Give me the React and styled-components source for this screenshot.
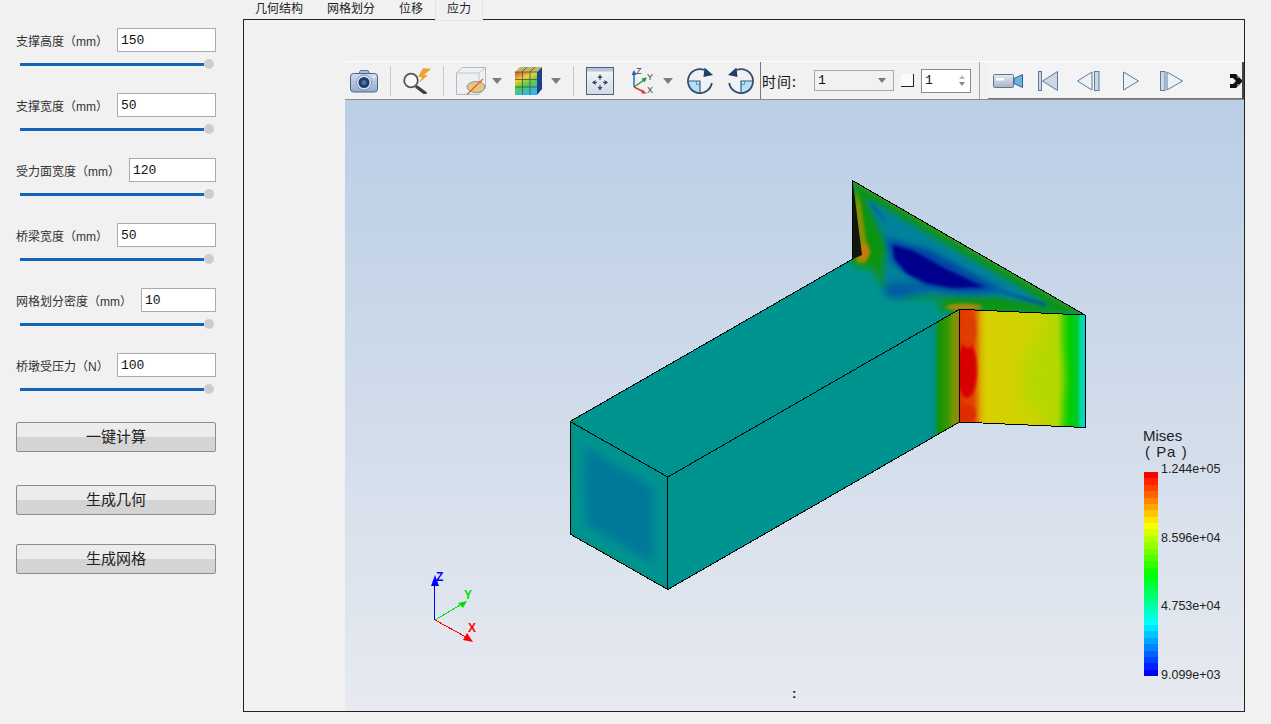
import React from "react";
import styled, { createGlobalStyle } from "styled-components";

const GlobalStyle = createGlobalStyle`
  html, body {
    margin: 0;
    height: 100%;
    overflow: hidden;
    background: #f1f1f1;
  }
  * { box-sizing: border-box; }
`;

const UI_FONT = `"Liberation Sans", "Noto Sans CJK SC", sans-serif`;
const CJK_FONT = `"Noto Sans CJK SC", sans-serif`;
const MONO_FONT = `"Liberation Mono", monospace`;

const Page = styled.div`
  display: flex;
  width: 1271px;
  height: 724px;
  background: #f1f1f1;
  font-family: ${UI_FONT};
`;

/* left panel */
const Sidebar = styled.aside`
  width: 243px;
  flex: none;
  padding: 28px 0 0 16px;
`;

const Field = styled.div`
  width: 200px;
  height: 65px;
`;

const FieldRow = styled.div`
  display: flex;
  align-items: center;
  height: 24px;
`;

const FieldLabel = styled.label`
  flex: none;
  width: ${(p) => p.$w}px;
  font-size: 12px;
  color: #333;
  white-space: nowrap;
`;

const FieldInput = styled.input`
  flex: 1;
  min-width: 0;
  height: 24px;
  padding: 0 3px;
  border: 1px solid #ababab;
  background: #fff;
  font-family: ${MONO_FONT};
  font-size: 13px;
  color: #111;
  outline: none;
`;

const Slider = styled.div`
  display: flex;
  align-items: center;
  width: 194px;
  height: 12px;
  margin: 6px 0 0 4px;
`;

const SliderTrack = styled.div`
  flex: 1;
  height: 3px;
  background: #0f66b8;
`;

const SliderThumb = styled.div`
  flex: none;
  width: 10px;
  height: 10px;
  border-radius: 50%;
  background: #cdcdcd;
`;

const ActionButton = styled.button`
  display: block;
  width: 200px;
  height: 30px;
  margin-top: ${(p) => p.$mt}px;
  padding: 0 0 4px;
  border: 1px solid #8c8c8c;
  border-radius: 2px;
  background: linear-gradient(#ececec 50%, #d4d4d4 50%);
  font-family: ${CJK_FONT};
  font-size: 15px;
  color: #222;
`;

/* tabs and frame */
const Main = styled.main`
  display: flex;
  flex-direction: column;
  width: 1002px;
  height: 712px;
`;

const TabBar = styled.div`
  display: flex;
  height: 19px;
  flex: none;
`;

const Tab = styled.div`
  position: relative;
  z-index: ${(p) => (p.$active ? 2 : 0)};
  height: ${(p) => (p.$active ? 21 : 19)}px;
  padding: 0 ${(p) => (p.$active ? 11 : 12)}px;
  font-family: ${CJK_FONT};
  font-size: 12px;
  line-height: 16px;
  color: #222;
  background: #f1f1f1;
  border-left: ${(p) => (p.$active ? "1px solid #e2e2e2" : "none")};
  border-right: ${(p) => (p.$active ? "1px solid #e2e2e2" : "none")};
  border-bottom: ${(p) => (p.$active ? "1px solid #e6e6e6" : "none")};
`;

const Frame = styled.div`
  flex: 1;
  display: flex;
  flex-direction: column;
  border: 1px solid #222;
  padding: 41px 0 0 101px;
  background: #f1f1f1;
`;

const ToolBar = styled.div`
  flex: none;
  display: flex;
  align-items: center;
  height: 39px;
  border-top: 1px solid #fff;
  border-bottom: 1px solid #8a8a8a;
  background: #f1f1f1;
  font-family: ${CJK_FONT};
  color: #111;
`;

const Tool = styled.svg`
  flex: none;
  display: block;
  margin-left: ${(p) => p.$ml}px;
`;

const Separator = styled.div`
  flex: none;
  width: 1px;
  height: 30px;
  margin-left: ${(p) => p.$ml}px;
  background: #c8c8c8;
`;

const GroupDivider = styled.div`
  flex: none;
  align-self: stretch;
  width: 1px;
  margin-left: ${(p) => p.$ml}px;
  background: ${(p) => p.$color};
`;

const TimeLabel = styled.span`
  flex: none;
  width: 37px;
  margin-left: 1px;
  font-size: 14px;
  letter-spacing: 1px;
  white-space: nowrap;
`;

const Combo = styled.div`
  flex: none;
  display: flex;
  align-items: center;
  justify-content: space-between;
  width: 80px;
  height: 21px;
  margin-left: 15px;
  padding: 0 7px 0 3px;
  border: 1px solid #a8a8a8;
  font-family: ${MONO_FONT};
  font-size: 13px;
`;

const ComboArrow = styled.i`
  width: 0;
  height: 0;
  border-left: 4px solid transparent;
  border-right: 4px solid transparent;
  border-top: 5px solid #777;
`;

const CheckBox = styled.div`
  flex: none;
  width: 13px;
  height: 13px;
  margin-left: 7px;
  background: #fafafa;
  border-right: 1px solid #222;
  border-bottom: 1px solid #222;
`;

const Spin = styled.div`
  flex: none;
  display: flex;
  align-items: center;
  justify-content: space-between;
  width: 50px;
  height: 24px;
  margin-left: 7px;
  padding: 0 5px 0 3px;
  border: 1px solid #8a8a8a;
  background: #fff;
  font-family: ${MONO_FONT};
  font-size: 13px;
`;

const SpinArrows = styled.div`
  display: flex;
  flex-direction: column;
  gap: 3px;
`;

const SpinArrow = styled.i`
  width: 0;
  height: 0;
  border-left: 3px solid transparent;
  border-right: 3px solid transparent;
  border-top: ${(p) => (p.$up ? "none" : "4px solid #888")};
  border-bottom: ${(p) => (p.$up ? "4px solid #bbb" : "none")};
`;

const PlayerGroup = styled.div`
  flex: none;
  align-self: stretch;
  display: flex;
  align-items: center;
  width: 256px;
  margin-left: 8px;
  background: #f3f3f3;
  border-right: 2px solid #444;
  box-shadow: inset 0 -1px 0 #777;
`;

const Viewport = styled.div`
  position: relative;
  flex: 1;
  background: linear-gradient(#bacee5, #e7eaf0);
  overflow: hidden;
`;

const SceneSvg = styled.svg`
  display: block;
  width: 100%;
  height: 100%;
`;

const Triad = styled.svg`
  position: absolute;
  left: 80px;
  top: 468px;
`;

const CenterMark = styled.span`
  position: absolute;
  left: 447px;
  top: 586px;
  font-family: "Liberation Sans", sans-serif;
  font-size: 13px;
  font-weight: 700;
  line-height: 16px;
  color: #111;
`;

const Legend = styled.div`
  position: absolute;
  left: 798px;
  top: 328px;
  font-family: "Liberation Sans", sans-serif;
  color: #222;
`;

const LegendTitle = styled.div`
  font-size: 15px;
  line-height: 16px;
  margin-bottom: 1px;
`;

const LegendPaLine = styled.span`
  margin-left: 2px;
  letter-spacing: 0.6px;
  word-spacing: 1px;
`;

const LegendScale = styled.div`
  display: flex;
  align-items: center;
`;

const ColorBar = styled.div`
  display: flex;
  flex-direction: column;
  width: 14px;
  height: 204px;
  margin: 5px 0 0 1px;
`;

const ColorBand = styled.div`
  flex: 1;
`;

const LegendLabels = styled.div`
  display: flex;
  flex-direction: column;
  justify-content: space-between;
  height: 220px;
  margin: 1px 0 0 3px;
  font-size: 12.5px;
  line-height: 14px;
`;

const BANDS = Array.from({ length: 32 }, (_, i) => (i / 31) * 240);

const FIELDS = [
  { label: "支撑高度（mm）", value: "150", w: 101 },
  { label: "支撑宽度（mm）", value: "50", w: 101 },
  { label: "受力面宽度（mm）", value: "120", w: 113 },
  { label: "桥梁宽度（mm）", value: "50", w: 101 },
  { label: "网格划分密度（mm）", value: "10", w: 125 },
  { label: "桥墩受压力（N）", value: "100", w: 101 },
];

const TABS = ["几何结构", "网格划分", "位移", "应力"];

function DropArrow({ ml }) {
  return (
    <Tool $ml={ml} width="10" height="6" viewBox="0 0 10 6">
      <path d="M0 0H10L5 6Z" fill="#7d7d7d" />
    </Tool>
  );
}

function CameraIcon({ ml }) {
  return (
    <Tool $ml={ml} width="28" height="24" viewBox="0 0 28 24">
      <defs>
        <linearGradient id="camBody" x1="0" y1="0" x2="0" y2="1">
          <stop offset="0" stopColor="#cfdcee" />
          <stop offset="1" stopColor="#93acce" />
        </linearGradient>
      </defs>
      <path d="M8.5 5L10.5 1.5H18L20 5Z" fill="#a9bdd8" stroke="#5a7499" />
      <rect x="0.5" y="4.5" width="27" height="18.5" rx="3" fill="url(#camBody)" stroke="#4a648c" />
      <circle cx="14" cy="13.5" r="7.5" fill="#dbe5f2" stroke="#7d95b6" />
      <circle cx="14" cy="13.5" r="5.5" fill="#1f3a6e" />
      <circle cx="14" cy="13.5" r="2.5" fill="#4a6fa8" />
      <circle cx="24" cy="8" r="1" fill="#fff" />
    </Tool>
  );
}

function ZoomBoltIcon({ ml }) {
  return (
    <Tool $ml={ml} width="29" height="26" viewBox="0 0 29 26">
      <path d="M20 0L15 9H19L16 15L25 7H21L28 1Z" fill="#f0a232" />
      <path d="M14 19L22 25" stroke="#3f3f3f" strokeWidth="3.4" strokeLinecap="round" />
      <circle cx="8" cy="12.5" r="6.8" fill="#f6f7f9" stroke="#555" strokeWidth="1.8" />
    </Tool>
  );
}

function ClipCubeIcon({ ml }) {
  return (
    <Tool $ml={ml} width="30" height="28" viewBox="0 0 30 28">
      <path d="M0.5 6L6 0.5H29.5V21L23 27.5H0.5Z" fill="#eef0f3" stroke="#b2b8c0" />
      <path d="M0.5 6H23V27.5M23 6L29.5 0.5" fill="none" stroke="#c2c7ce" />
      <ellipse cx="20" cy="20" rx="9" ry="5.5" fill="#e6c77a" stroke="#7e93ad" />
      <path d="M11 27.5L27 12" stroke="#df5a35" strokeWidth="1.1" />
    </Tool>
  );
}

function ColorCubeIcon({ ml }) {
  return (
    <Tool $ml={ml} width="27" height="28" viewBox="0 0 27 28">
      <defs>
        <linearGradient id="cubeFace" x1="0" y1="0" x2="0.4" y2="1">
          <stop offset="0" stopColor="#e8402c" />
          <stop offset="0.35" stopColor="#f0d030" />
          <stop offset="0.65" stopColor="#58c850" />
          <stop offset="1" stopColor="#30b8e0" />
        </linearGradient>
      </defs>
      <path d="M0 5L5 0H27L22 5Z" fill="#c0b868" />
      <rect x="0" y="5" width="22" height="23" fill="url(#cubeFace)" />
      <path d="M22 5L27 0V22L22 28Z" fill="#1f3f88" />
      <path d="M7.5 5V28M15 5V28M0 12.5H22M0 20H22M7 5L12 0M15 5L20 0M0 5H22" stroke="#3d5a48" strokeWidth="0.8" fill="none" />
    </Tool>
  );
}

function FitIcon({ ml }) {
  return (
    <Tool $ml={ml} width="28" height="28" viewBox="0 0 28 28">
      <defs>
        <linearGradient id="fitBody" x1="0" y1="0" x2="0" y2="1">
          <stop offset="0" stopColor="#f6f7f9" />
          <stop offset="1" stopColor="#d4d9e2" />
        </linearGradient>
      </defs>
      <rect x="0.5" y="0.5" width="27" height="27" fill="url(#fitBody)" stroke="#4a6288" />
      <rect x="1" y="1" width="26" height="3.5" fill="#b4c4da" />
      <path d="M14 10V13M14 18V21M8 15.5H11M17 15.5H20" stroke="#2c466e" strokeWidth="1" fill="none" />
      <path d="M14 7.5L11.5 11H16.5ZM14 23.5L11.5 20H16.5ZM6 15.5L9.5 13V18ZM22 15.5L18.5 13V18Z" fill="#2c466e" />
    </Tool>
  );
}

function AxesIcon({ ml }) {
  return (
    <Tool $ml={ml} width="23" height="27" viewBox="0 0 23 27">
      <path d="M2 20V6" stroke="#1c62c4" strokeWidth="1.4" />
      <path d="M2 3L-0.5 8H4.5Z" fill="#1c62c4" />
      <path d="M2 20L12 13" stroke="#1d9a3a" strokeWidth="1.4" />
      <path d="M15 10.5L9.5 11.5L12.5 15.5Z" fill="#1d9a3a" />
      <path d="M2 20L12 25" stroke="#e0343a" strokeWidth="1.4" />
      <path d="M15 26.5L10 22.5L9.5 26.5Z" fill="#e0343a" />
      <g fontFamily="Liberation Sans, sans-serif" fontSize="9" fill="#444">
        <text x="4" y="7">Z</text>
        <text x="15" y="13">Y</text>
        <text x="15" y="26">X</text>
      </g>
    </Tool>
  );
}

function RotateIcon({ ml, flip }) {
  return (
    <Tool $ml={ml} width="26" height="26" viewBox="0 0 26 26">
      <g transform={flip ? "translate(26 0) scale(-1 1)" : undefined}>
        <path d="M13 13H1.2A11.8 11.8 0 0 0 13 24.8Z" fill="#b7def5" />
        <path d="M24.8 15A12 12 0 1 1 17.5 2" fill="none" stroke="#2f4e72" strokeWidth="1.8" />
        <path d="M17.5 -0.5L26 7L16.5 9Z" fill="#1f3f6a" />
        <path d="M1 13H13V25" fill="none" stroke="#2f5f8e" strokeWidth="1.2" />
        <path d="M9.5 13V16.5H13" fill="none" stroke="#4d84b4" strokeWidth="0.8" />
      </g>
    </Tool>
  );
}

function VideoIcon({ ml }) {
  return (
    <Tool $ml={ml} width="30" height="16" viewBox="0 0 30 16">
      <defs>
        <linearGradient id="vidBody" x1="0" y1="0" x2="0" y2="1">
          <stop offset="0" stopColor="#e6eaf1" />
          <stop offset="1" stopColor="#a8b4c6" />
        </linearGradient>
      </defs>
      <rect x="0.5" y="1.5" width="20" height="13" rx="1" fill="url(#vidBody)" stroke="#5d7696" />
      <rect x="3" y="5" width="8" height="2.5" fill="#fff" />
      <path d="M21 5.5L29.5 1.5V14.5L21 10.5Z" fill="#65b4e6" stroke="#3e5f86" />
    </Tool>
  );
}

const playerFill = "#cfd7e3";
const playerStroke = "#5b7ba3";

function FirstIcon({ ml }) {
  return (
    <Tool $ml={ml} width="20" height="20" viewBox="0 0 20 20">
      <rect x="0.5" y="0.5" width="3" height="19" fill={playerFill} stroke={playerStroke} />
      <path d="M19.5 0.5V19.5L4.5 10Z" fill={playerFill} stroke={playerStroke} />
    </Tool>
  );
}

function PrevIcon({ ml }) {
  return (
    <Tool $ml={ml} width="23" height="20" viewBox="0 0 23 20">
      <path d="M0.5 10L15 1V19Z" fill="#eef1f6" stroke={playerStroke} />
      <rect x="17.5" y="0.5" width="4.5" height="19" fill={playerFill} stroke={playerStroke} />
    </Tool>
  );
}

function PlayIcon({ ml }) {
  return (
    <Tool $ml={ml} width="16" height="20" viewBox="0 0 16 20">
      <path d="M0.5 1L15.5 10L0.5 19Z" fill="#eef1f6" stroke={playerStroke} />
    </Tool>
  );
}

function NextIcon({ ml }) {
  return (
    <Tool $ml={ml} width="23" height="20" viewBox="0 0 23 20">
      <rect x="0.5" y="0.5" width="4.5" height="19" fill={playerFill} stroke={playerStroke} />
      <path d="M7 1L22.5 10L7 19Z" fill="#eef1f6" stroke={playerStroke} />
    </Tool>
  );
}

function ExtensionIcon({ ml }) {
  return (
    <Tool $ml={ml} width="12" height="16" viewBox="0 0 12 16">
      <path d="M0 1H6L12 7V9L6 15H0V11H3L6 8L3 5H0Z" fill="#111" />
      <path d="M7 3H9V5H7ZM7 11H9V13H7Z" fill="#777" />
    </Tool>
  );
}

const pts = (list) => list.map((p) => p.join(",")).join(" ");

const A = [570, 421.5];
const B = [667.8, 477];
const C = [570, 534];
const D = [667.8, 589.5];
const E = [852.7, 259];
const F = [852.7, 180.7];
const G = [1085, 315];
const H = [1085, 427.5];
const I = [959.5, 309.3];
const J = [959.5, 422];

const TEAL = "#009490";

function StressScene() {
  return (
    <SceneSvg viewBox="0 0 899 611">
      <defs>
        <filter id="blur1" x="-40%" y="-40%" width="180%" height="180%"><feGaussianBlur stdDeviation="1.5" /></filter>
        <filter id="blur2" x="-30%" y="-30%" width="160%" height="160%"><feGaussianBlur stdDeviation="3" /></filter>
        <filter id="blurLobe" x="-50%" y="-80%" width="200%" height="260%"><feGaussianBlur stdDeviation="4" /></filter>
        <filter id="blur4" x="-30%" y="-30%" width="160%" height="160%"><feGaussianBlur stdDeviation="5" /></filter>
        <filter id="blur7" x="-50%" y="-50%" width="200%" height="200%"><feGaussianBlur stdDeviation="7" /></filter>
        <clipPath id="topClip"><polygon points={pts([A, E, F, G, I, B])} /></clipPath>
        <clipPath id="rightClip"><polygon points={pts([I, G, H, J])} /></clipPath>
        <clipPath id="frontClip"><polygon points={pts([A, B, D, C])} /></clipPath>
        <linearGradient id="sideGrad" gradientUnits="userSpaceOnUse" x1="925" y1="0" x2="960" y2="0">
          <stop offset="0" stopColor={TEAL} />
          <stop offset="0.25" stopColor="#009088" />
          <stop offset="0.42" stopColor="#149400" />
          <stop offset="0.65" stopColor="#3a9600" />
          <stop offset="0.82" stopColor="#7a9600" />
          <stop offset="1" stopColor="#a07c10" />
        </linearGradient>
        <linearGradient id="rightGrad" gradientUnits="userSpaceOnUse" x1="960" y1="0" x2="1085" y2="0">
          <stop offset="0" stopColor="#e03400" />
          <stop offset="0.11" stopColor="#e04800" />
          <stop offset="0.17" stopColor="#dcb400" />
          <stop offset="0.21" stopColor="#d8d000" />
          <stop offset="0.6" stopColor="#ccd400" />
          <stop offset="0.78" stopColor="#b0d800" />
          <stop offset="0.84" stopColor="#30d000" />
          <stop offset="0.88" stopColor="#00cc00" />
          <stop offset="0.94" stopColor="#00cc30" />
          <stop offset="0.965" stopColor="#00d8a0" />
          <stop offset="1" stopColor="#00d8d8" />
        </linearGradient>
      </defs>
      <g transform="translate(-345 -100)">
        <polygon points={pts([A, B, D, C])} fill={TEAL} />
        <g clipPath="url(#frontClip)">
          <polygon points={pts([[584, 446], [654, 488], [654, 564], [586, 524]])} fill="#00789a" filter="url(#blur4)" />
          <polygon points={pts([A, C, [573, 534], [573, 424]])} fill="#0a9060" filter="url(#blur1)" opacity="0.7" />
          <polygon points={pts([C, D, [667, 587], [570, 532]])} fill="#0c9050" filter="url(#blur1)" opacity="0.7" />
        </g>

        <polygon points={pts([B, I, J, D])} fill="url(#sideGrad)" />

        <polygon points={pts([I, G, H, J])} fill="url(#rightGrad)" />
        <g clipPath="url(#rightClip)">
          <ellipse cx="1042" cy="378" rx="18" ry="36" fill="#b4d800" filter="url(#blur7)" />
          <ellipse cx="967" cy="370" rx="10" ry="28" fill="#d60000" filter="url(#blur1)" />
          <ellipse cx="968" cy="330" rx="8" ry="18" fill="#e03c00" filter="url(#blur1)" />
          <ellipse cx="966" cy="414" rx="10" ry="10" fill="#e02a00" filter="url(#blur1)" />
        </g>

        <polygon points={pts([A, E, F, G, I, B])} fill={TEAL} />
        <g clipPath="url(#topClip)">
          <polygon points={pts([F, G, [1075, 314], [960, 311], [936, 311], [945, 300], [905, 297], [880, 283], [873, 269], [860, 268], [850, 262]])} fill="#0c9410" filter="url(#blur2)" />
          <line x1={F[0]} y1={F[1]} x2={G[0]} y2={G[1]} stroke="#4a9400" strokeWidth="3" filter="url(#blur1)" />
          <polygon points={pts([[864, 196], [1054, 307], [1000, 298], [945, 297], [892, 296], [882, 280], [886, 245]])} fill="#00829c" filter="url(#blur2)" />
          <polygon points={pts([[886, 238], [930, 250], [1004, 291], [960, 293], [925, 288], [892, 262]])} fill="#0044a4" filter="url(#blur2)" />
          <polygon points={pts([[880, 289], [897, 282], [932, 285], [920, 292], [892, 299]])} fill="#0058a4" filter="url(#blurLobe)" />
          <polygon points={pts([[893, 245], [914, 251], [944, 268], [984, 287], [952, 288], [926, 283], [906, 273], [894, 258]])} fill="#00008c" filter="url(#blur1)" />
          <line x1="871" y1="203" x2="884" y2="220" stroke="#0060a8" strokeWidth="2.5" filter="url(#blur1)" />
          <line x1="1000" y1="291" x2="1046" y2="305" stroke="#0048a8" strokeWidth="2" filter="url(#blur1)" />
          <polygon points={pts([[856, 190], [861, 205], [866, 240], [870, 252], [865, 264], [856, 262]])} fill="#8a9000" filter="url(#blur1)" />
          <ellipse cx="864" cy="252" rx="5" ry="8" fill="#c87a10" filter="url(#blur1)" />
          <ellipse cx="964" cy="307" rx="18" ry="3.5" fill="#a88810" filter="url(#blur1)" />
          <polygon points={pts([A, [580, 420], [574, 426]])} fill="#0a9040" filter="url(#blur1)" />
        </g>
        <polygon points={pts([[853, 184], [862, 255], [853, 259]])} fill="#12160c" />

        <g fill="none" stroke="#000" strokeWidth="1" shapeRendering="crispEdges">
          <polygon points={pts([A, E, F, G, H, J, D, C])} />
          <polyline points={pts([A, B, D])} />
          <polyline points={pts([B, I, J])} />
          <line x1={I[0]} y1={I[1]} x2={G[0]} y2={G[1]} />
        </g>
      </g>
    </SceneSvg>
  );
}

function AxisTriad() {
  return (
    <Triad width="60" height="80" viewBox="425 568 60 80">
      <g shapeRendering="crispEdges" strokeWidth="1" fill="none">
        <line x1="434.5" y1="620" x2="434.5" y2="584" stroke="#0000ff" />
        <line x1="435" y1="620" x2="462" y2="604" stroke="#00e000" />
        <line x1="435" y1="620" x2="466" y2="637" stroke="#ff0000" />
      </g>
      <path d="M435 575L439 586H431Z" fill="#0000ff" />
      <path d="M467 601L463 608L458 603Z" fill="#00e000" />
      <path d="M473 642L463 640L467 633Z" fill="#ff0000" />
      <g fontFamily="Liberation Sans, sans-serif" fontSize="12" fontWeight="700">
        <text x="436" y="581" fill="#0000ff">Z</text>
        <text x="464" y="599" fill="#00e000">Y</text>
        <text x="468" y="632" fill="#ff0000">X</text>
      </g>
    </Triad>
  );
}

export default function App() {
  return (
    <Page>
      <GlobalStyle />
      <Sidebar>
        {FIELDS.map((f) => (
          <Field key={f.label}>
            <FieldRow>
              <FieldLabel $w={f.w}>{f.label}</FieldLabel>
              <FieldInput defaultValue={f.value} />
            </FieldRow>
            <Slider>
              <SliderTrack />
              <SliderThumb />
            </Slider>
          </Field>
        ))}
        <ActionButton $mt={4}>一键计算</ActionButton>
        <ActionButton $mt={33}>生成几何</ActionButton>
        <ActionButton $mt={29}>生成网格</ActionButton>
      </Sidebar>
      <Main>
        <TabBar>
          {TABS.map((t, i) => (
            <Tab key={t} $active={i === 3}>{t}</Tab>
          ))}
        </TabBar>
        <Frame>
          <ToolBar>
            <CameraIcon ml={5} />
            <Separator $ml={12} />
            <ZoomBoltIcon ml={12} />
            <Separator $ml={11} />
            <ClipCubeIcon ml={12} />
            <DropArrow ml={6} />
            <ColorCubeIcon ml={13} />
            <DropArrow ml={9} />
            <Separator $ml={12} />
            <FitIcon ml={12} />
            <AxesIcon ml={18} />
            <DropArrow ml={8} />
            <RotateIcon ml={14} />
            <RotateIcon ml={15} flip />
            <GroupDivider $ml={6} $color="#777" />
            <TimeLabel>时间:</TimeLabel>
            <Combo>
              1
              <ComboArrow />
            </Combo>
            <CheckBox />
            <Spin>
              1
              <SpinArrows>
                <SpinArrow $up />
                <SpinArrow />
              </SpinArrows>
            </Spin>
            <GroupDivider $ml={8} $color="#a8a8a8" />
            <PlayerGroup>
              <VideoIcon ml={5} />
              <FirstIcon ml={15} />
              <PrevIcon ml={19} />
              <PlayIcon ml={23} />
              <NextIcon ml={21} />
              <ExtensionIcon ml={47} />
            </PlayerGroup>
          </ToolBar>
          <Viewport>
            <StressScene />
            <AxisTriad />
            <CenterMark>:</CenterMark>
            <Legend>
              <LegendTitle>
                Mises
                <br />
                <LegendPaLine>( Pa )</LegendPaLine>
              </LegendTitle>
              <LegendScale>
                <ColorBar>
                  {BANDS.map((hue) => (
                    <ColorBand key={hue} style={{ background: `hsl(${hue}, 100%, 50%)` }} />
                  ))}
                </ColorBar>
                <LegendLabels>
                  <span>1.244e+05</span>
                  <span>8.596e+04</span>
                  <span>4.753e+04</span>
                  <span>9.099e+03</span>
                </LegendLabels>
              </LegendScale>
            </Legend>
          </Viewport>
        </Frame>
      </Main>
    </Page>
  );
}
